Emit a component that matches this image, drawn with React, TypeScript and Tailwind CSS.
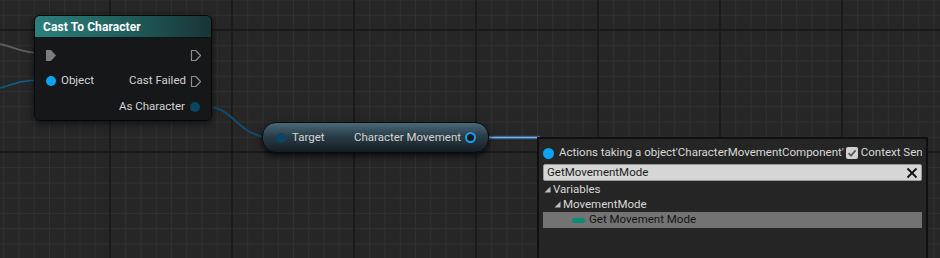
import React from 'react';

const ExecPin = ({ filled }: { filled?: boolean }) => (
  <svg width="12" height="13" viewBox="0 0 12 13" className="shrink-0">
    {filled ? (
      <path d="M1 1 H6 L11 6.5 L6 12 H1 Z" fill="#7c7c7c" />
    ) : (
      <path d="M1.5 1.5 H5.8 L10.5 6.5 L5.8 11.5 H1.5 Z" fill="none" stroke="#8e8e8e" strokeWidth="1.2" strokeLinejoin="round" />
    )}
  </svg>
);

const Expander = () => (
  <svg width="7" height="7" viewBox="0 0 7 7" className="shrink-0">
    <path d="M6.5 0.5 V6.5 H0.5 Z" fill="#bdbdbd" />
  </svg>
);

const CastNode = () => (
  <div className="absolute left-[34px] top-[15px] w-[178px] h-[106px] rounded-[6px] bg-[#141617]/95 border border-[#090909] shadow-[0_2px_6px_rgba(0,0,0,0.7)] overflow-hidden">
    <div className="h-[22px] pl-[8px] flex items-center bg-[linear-gradient(to_right,#2c7f7c,#1f5b5a_55%,#1a3435)] border-b border-[#0c1414]">
      <span className="text-[12px] font-bold text-white leading-none tracking-[0.1px]">Cast To Character</span>
    </div>
    <div className="pt-[4px] text-[11.5px] text-[#d4d4d4]">
      <div className="h-[26px] flex items-center justify-between pl-[10px] pr-[9px]">
        <ExecPin filled />
        <ExecPin />
      </div>
      <div className="h-[26px] flex items-center justify-between pl-[11px] pr-[9px]">
        <div className="flex items-center gap-[5px]">
          <span className="w-[10px] h-[10px] rounded-full bg-[#0ba4f5]" />
          <span>Object</span>
        </div>
        <div className="flex items-center gap-[4px]">
          <span>Cast Failed</span>
          <ExecPin />
        </div>
      </div>
      <div className="h-[26px] flex items-center justify-end pr-[11px]">
        <div className="flex items-center gap-[5px]">
          <span>As Character</span>
          <span className="w-[10px] h-[10px] rounded-full bg-[#0c4463]" />
        </div>
      </div>
    </div>
  </div>
);

const GetNode = () => (
  <div className="absolute left-[262px] top-[122px] w-[227px] h-[31px] rounded-[14px] border border-[#0a0a0a] bg-[linear-gradient(to_bottom,#4a6878,#2a3d48_45%,#161d22)] shadow-[0_3px_6px_rgba(0,0,0,0.75)] flex items-center justify-between pl-[13px] pr-[12px] text-[11.5px] text-[#d4d4d4]">
    <div className="flex items-center gap-[6px]">
      <span className="w-[10px] h-[10px] rounded-full bg-[#0c4463]" />
      <span>Target</span>
    </div>
    <div className="flex items-center gap-[4px]">
      <span>Character Movement</span>
      <span className="w-[11px] h-[11px] rounded-full border-2 border-[#12a2ef] bg-[#121a1f]" />
    </div>
  </div>
);

const ContextMenu = () => (
  <div className="absolute left-[537px] top-[137px] w-[391px] h-[130px] bg-[#252525] border-2 border-[#0f0f0f] overflow-hidden text-[11.5px] text-[#d8d8d8]">
    <div className="pl-[4px] pr-[4px] pt-[7px]">
      <div className="h-[14px] flex items-center whitespace-nowrap overflow-hidden">
        <span className="w-[11px] h-[11px] rounded-full bg-[#0ba4f5] shrink-0" />
        <span className="ml-[5px]">Actions taking a object'CharacterMovementComponent'</span>
        <span className="ml-[2px] w-[12px] h-[12px] rounded-[2px] bg-[#d0d0d0] flex items-center justify-center shrink-0">
          <svg width="10" height="10" viewBox="0 0 10 10">
            <path d="M1.5 5.2 L4 7.6 L8.6 2.4" fill="none" stroke="#5a5a5a" strokeWidth="1.8" />
          </svg>
        </span>
        <span className="ml-[3px]">Context Sensitive</span>
      </div>
      <div className="mt-[4px] h-[17px] rounded-[2px] bg-[#d6d6d6] border border-[#9a9a9a] flex items-center justify-between pl-[3px] pr-[3px] text-[#1c1c1c]">
        <span>GetMovementMode</span>
        <svg width="12" height="12" viewBox="0 0 12 12">
          <path d="M1.5 1.5 L10.5 10.5 M10.5 1.5 L1.5 10.5" stroke="#111" strokeWidth="1.8" />
        </svg>
      </div>
      <div className="mt-[1px] h-[15px] flex items-center gap-[2px] pl-[1px]">
        <Expander />
        <span>Variables</span>
      </div>
      <div className="h-[15px] flex items-center gap-[2px] pl-[11px]">
        <Expander />
        <span>MovementMode</span>
      </div>
      <div className="h-[16px] bg-[#737373] flex items-center pl-[29px] text-[#141414]">
        <span className="w-[13px] h-[5px] rounded-full bg-[#0b8a78]" />
        <span className="ml-[4px]">Get Movement Mode</span>
      </div>
    </div>
  </div>
);

export default function App() {
  return (
    <div className="relative w-[940px] h-[258px] overflow-hidden bg-[#262626] bg-[linear-gradient(to_right,#1b1b1b_2px,transparent_2px),linear-gradient(to_bottom,#1b1b1b_2px,transparent_2px),linear-gradient(to_right,#303030_1px,transparent_1px),linear-gradient(to_bottom,#303030_1px,transparent_1px)] bg-[size:122px_122px,122px_122px,15.25px_15.25px,15.25px_15.25px] bg-[position:109px_29px,109px_29px,110px_30px,110px_30px] font-['Roboto','Liberation_Sans',sans-serif]">
      <svg className="absolute inset-0" width="940" height="258">
        <path d="M0 44 C 14 47, 22 53, 40 53" fill="none" stroke="#5b5b5b" strokeWidth="2" />
        <path d="M0 88 C 14 84, 22 80, 40 80" fill="none" stroke="#0f5b86" strokeWidth="1.6" />
        <path d="M200 106 C 240 106, 232 138, 278 138" fill="none" stroke="#0f4d70" strokeWidth="2" />
        <path d="M476 137.5 L 540 137.5" fill="none" stroke="#2c4f78" strokeWidth="3.5" />
        <path d="M476 137.5 L 540 137.5" fill="none" stroke="#7aaee0" strokeWidth="1.4" />
      </svg>
      <CastNode />
      <GetNode />
      <ContextMenu />
    </div>
  );
}
